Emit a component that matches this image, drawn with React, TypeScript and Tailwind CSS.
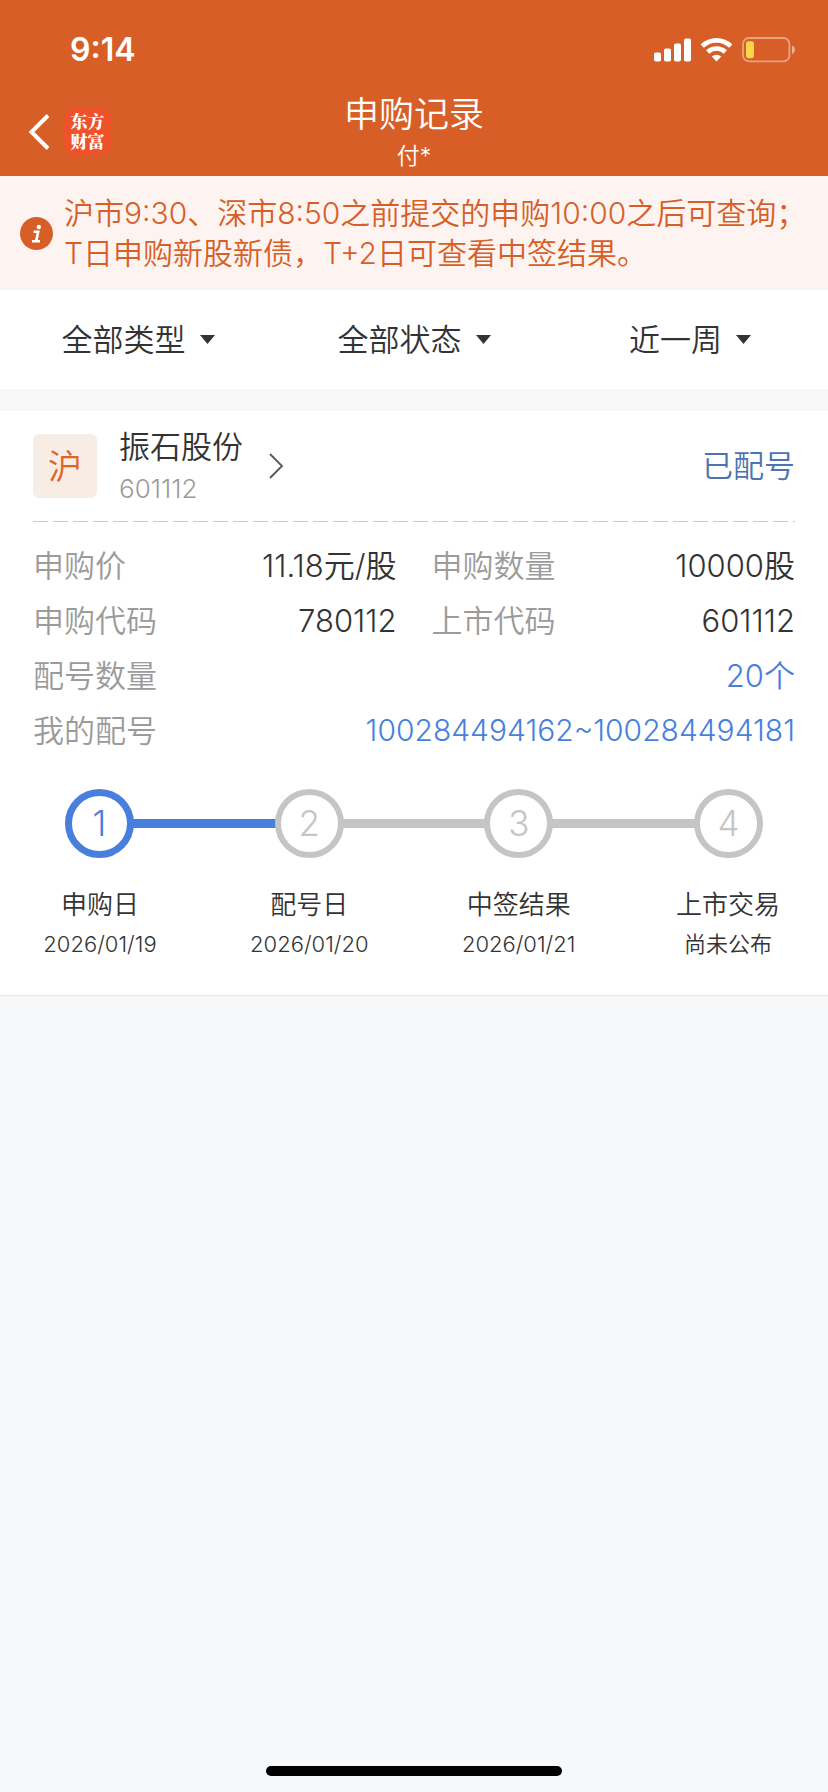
import { Fragment } from "react";

const filters = [
  { name: "type", label: "类型", options: ["全部类型", "新股", "新债"] },
  { name: "status", label: "状态", options: ["全部状态", "已配号", "已中签"] },
  { name: "range", label: "时间", options: ["近一周", "近一月", "近一年"] },
];

const details = [
  { label: "申购价", value: "11.18元/股" },
  { label: "申购数量", value: "10000股" },
  { label: "申购代码", value: "780112" },
  { label: "上市代码", value: "601112" },
];

const steps = [
  { title: "申购日", date: "2026/01/19", active: true },
  { title: "配号日", date: "2026/01/20", active: false },
  { title: "中签结果", date: "2026/01/21", active: false },
  { title: "上市交易", date: "尚未公布", active: false },
];

function StatusIcons() {
  return (
    <div className="flex items-center">
      <svg width="37" height="24" viewBox="0 0 37 24" fill="#fff" aria-hidden="true">
        <rect x="0" y="14.5" width="7" height="9" rx="1.8" />
        <rect x="10" y="10.5" width="7" height="13" rx="1.8" />
        <rect x="20" y="5.5" width="7" height="18" rx="1.8" />
        <rect x="30" y="0.5" width="7" height="23" rx="1.8" />
      </svg>
      <svg className="ml-[9px]" width="33" height="24" viewBox="0 0 33 24" aria-hidden="true">
        <g fill="none" stroke="#fff" strokeWidth="4.6">
          <path d="M2.2 8.2A20.4 20.4 0 0 1 30.8 8.2" />
          <path d="M7.7 14A12.7 12.7 0 0 1 25.3 14" />
        </g>
        <path d="M11.7 18.6a7 7 0 0 1 9.6 0L16.5 23.6z" fill="#fff" />
      </svg>
      <svg className="ml-[9px]" width="54" height="26" viewBox="0 0 54 26" aria-hidden="true">
        <rect x="1" y="1" width="46.4" height="23.4" rx="6" fill="none" stroke="#fff" strokeOpacity="0.42" strokeWidth="1.8" />
        <path d="M50 8.5c4 1.2 4 7.3 0 8.5z" fill="#fff" fillOpacity="0.5" />
        <rect x="4" y="4.2" width="8" height="17" rx="2.6" fill="#f8d74a" />
      </svg>
    </div>
  );
}

function Header() {
  return (
    <header className="bg-[#d75f27] text-white">
      <div className="flex h-[92px] items-center justify-between pt-2 pr-8 pl-[70px]">
        <span className="text-[32px] leading-10 font-semibold">9:14</span>
        <StatusIcons />
      </div>
      <div className="grid h-[84px] grid-cols-[1fr_auto_1fr] items-start">
        <div className="flex items-center pt-4 pl-7">
          <button type="button" aria-label="返回" className="pr-[14px]">
            <svg width="22" height="36" viewBox="0 0 22 36" fill="none" stroke="#fff" strokeWidth="4" aria-hidden="true">
              <path d="M20 1.5L3.5 18L20 34.5" />
            </svg>
          </button>
          <a
            href="#home"
            className="flex h-[47px] w-[47px] items-center justify-center rounded-[10px] bg-[#ee522a] text-center font-['Inter','Noto_Serif_CJK_SC','Noto_Sans_CJK_SC',sans-serif] text-[17px] leading-5 font-black"
          >
            东方
            <br />
            财富
          </a>
        </div>
        <div className="text-center">
          <h1 className="text-[35px] leading-[44px]">申购记录</h1>
          <p className="text-[23px] leading-10">付*</p>
        </div>
      </div>
    </header>
  );
}

function Notice() {
  return (
    <div className="flex items-center gap-[11px] bg-[#fdf4f1] py-[17px] pl-5 text-[#d75f27]">
      <svg className="shrink-0" width="33" height="33" viewBox="0 0 33 33" aria-hidden="true">
        <circle cx="16.5" cy="16.5" r="16.5" fill="#d75f27" />
        <circle cx="18.8" cy="10" r="2.2" fill="#fff" />
        <path d="M13.6 14.7h4.6l-2 9.3M12 24.2h8" fill="none" stroke="#fff" strokeWidth="2.6" />
      </svg>
      <p className="text-[30px] leading-10">
        沪市9:30、深市8:50之前提交的申购10:00之后可查询；
        <br />
        T日申购新股新债，T+2日可查看中签结果。
      </p>
    </div>
  );
}

function Filters() {
  return (
    <div className="grid grid-cols-3 bg-white">
      {filters.map((filter) => (
        <label key={filter.name} className="flex h-[99px] items-center justify-center gap-[14px]">
          <select
            name={filter.name}
            aria-label={filter.label}
            className="field-sizing-content appearance-none bg-transparent text-[31px] leading-10 outline-none"
          >
            {filter.options.map((option) => (
              <option key={option}>{option}</option>
            ))}
          </select>
          <svg className="shrink-0" width="15" height="9" viewBox="0 0 15 9" fill="#333" aria-hidden="true">
            <path d="M0 0h15L7.5 9z" />
          </svg>
        </label>
      ))}
    </div>
  );
}

function Progress() {
  return (
    <div className="pt-[31px] pb-[35px]">
      <div className="flex items-center px-[65px] font-light">
        {steps.map((step, index) => (
          <Fragment key={step.title}>
            <span
              className={
                step.active
                  ? "flex size-[69px] items-center justify-center rounded-full border-7 border-[#487fdd] text-[35px] text-[#487fdd]"
                  : "flex size-[69px] items-center justify-center rounded-full border-[6px] border-[#c5c5c5] text-[35px] text-[#c5c5c5]"
              }
            >
              {index + 1}
            </span>
            {index < steps.length - 1 && (
              <span className={step.active ? "-mx-px h-[9px] flex-1 bg-[#487fdd]" : "-mx-px h-[9px] flex-1 bg-[#c5c5c5]"} />
            )}
          </Fragment>
        ))}
      </div>
      <ol className="mt-[30px] flex justify-between px-[30px] text-center">
        {steps.map((step) => (
          <li key={step.title} className="w-[140px]">
            <p className="text-[26px] leading-[34px]">{step.title}</p>
            <p className="mt-[6px] text-[22px] leading-8">{step.date}</p>
          </li>
        ))}
      </ol>
    </div>
  );
}

function RecordCard() {
  return (
    <section className="border-b border-[#e6e9ed] bg-white">
      <div className="mx-[33px]">
        <a href="#601112" className="flex h-[110px] items-center">
          <span className="flex size-16 items-center justify-center rounded-md bg-[#f8ede5] text-[34px] text-[#df6427]">沪</span>
          <span className="ml-[22px] flex flex-col pt-1">
            <span className="text-[31px] leading-[42px]">振石股份</span>
            <span className="text-[26px] leading-[42px] text-[#9b9b9b]">601112</span>
          </span>
          <svg className="ml-[26px]" width="15" height="26" viewBox="0 0 15 26" fill="none" stroke="#555" strokeWidth="1.8" aria-hidden="true">
            <path d="M1 1l12 12L1 25" />
          </svg>
          <span className="ml-auto text-[31px] text-[#4d73b0]">已配号</span>
        </a>
        <svg className="block h-px w-full" aria-hidden="true">
          <line x1="0" y1="0.5" x2="100%" y2="0.5" stroke="#ccc" strokeDasharray="15 5" />
        </svg>
        <dl className="pt-4 text-[31px] leading-[55px]">
          <div className="grid grid-cols-2 gap-x-[35px]">
            {details.map((item) => (
              <div key={item.label} className="flex justify-between">
                <dt className="text-[#9b9b9b]">{item.label}</dt>
                <dd>{item.value}</dd>
              </div>
            ))}
          </div>
          <div className="flex justify-between">
            <dt className="text-[#9b9b9b]">配号数量</dt>
            <dd className="text-[#487fdd]">20个</dd>
          </div>
          <div className="flex justify-between">
            <dt className="text-[#9b9b9b]">我的配号</dt>
            <dd className="text-[30px]">
              <a href="#numbers" className="text-[#487fdd]">
                100284494162~100284494181
              </a>
            </dd>
          </div>
        </dl>
      </div>
      <Progress />
    </section>
  );
}

export default function App() {
  return (
    <div className="flex min-h-screen flex-col bg-[#f6f8fa] font-['Inter','Noto_Sans_CJK_SC',sans-serif] font-[350] text-[#333]">
      <Header />
      <Notice />
      <Filters />
      <main className="mt-[22px]">
        <RecordCard />
      </main>
      <div className="mx-auto mt-auto mb-4 h-[10px] w-[296px] rounded-full bg-black" />
    </div>
  );
}
